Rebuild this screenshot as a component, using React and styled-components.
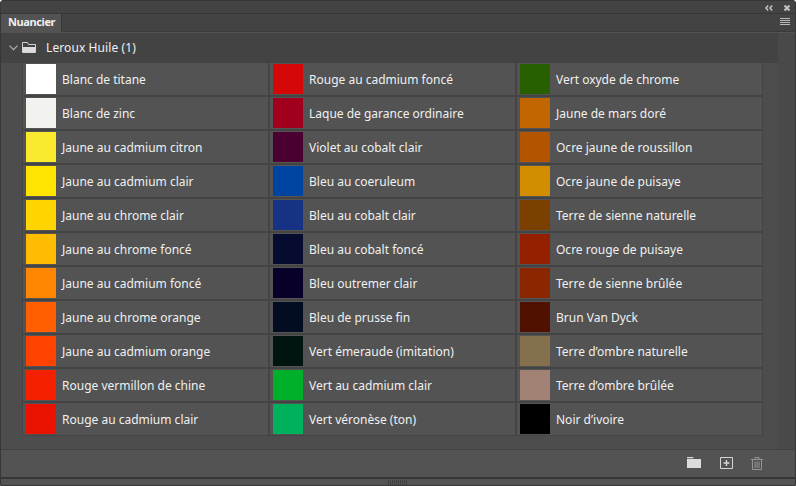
import { Fragment } from 'react'
import styled, { createGlobalStyle } from 'styled-components'

const columns = [
  [
    ['Blanc de titane', '#ffffff'],
    ['Blanc de zinc', '#f2f3ee'],
    ['Jaune au cadmium citron', '#fae92d'],
    ['Jaune au cadmium clair', '#ffe400'],
    ['Jaune au chrome clair', '#ffd500'],
    ['Jaune au chrome foncé', '#ffbc00'],
    ['Jaune au cadmium foncé', '#ff8600'],
    ['Jaune au chrome orange', '#ff5f00'],
    ['Jaune au cadmium orange', '#ff4200'],
    ['Rouge vermillon de chine', '#f42000'],
    ['Rouge au cadmium clair', '#e91200'],
  ],
  [
    ['Rouge au cadmium foncé', '#d50707'],
    ['Laque de garance ordinaire', '#a0001c'],
    ['Violet au cobalt clair', '#4b0032'],
    ['Bleu au coeruleum', '#0044a2'],
    ['Bleu au cobalt clair', '#163285'],
    ['Bleu au cobalt foncé', '#060c2f'],
    ['Bleu outremer clair', '#080029'],
    ['Bleu de prusse fin', '#020d22'],
    ['Vert émeraude (imitation)', '#001510'],
    ['Vert au cadmium clair', '#00b02a'],
    ['Vert véronèse (ton)', '#00b15b'],
  ],
  [
    ['Vert oxyde de chrome', '#286000'],
    ['Jaune de mars doré', '#c16600'],
    ['Ocre jaune de roussillon', '#b35500'],
    ['Ocre jaune de puisaye', '#d38d00'],
    ['Terre de sienne naturelle', '#7b3f00'],
    ['Ocre rouge de puisaye', '#942000'],
    ['Terre de sienne brûlée', '#8b2700'],
    ['Brun Van Dyck', '#501100'],
    ['Terre d’ombre naturelle', '#84704c'],
    ['Terre d’ombre brûlée', '#a18274'],
    ['Noir d’ivoire', '#000000'],
  ],
]

export default function App() {
  return (
    <Fragment>
      <GlobalStyle />
      <Panel>
        <TitleBar>
          <svg width="8" height="6" viewBox="0 0 8 6" fill="none" stroke="#c4c4c4" strokeWidth="1.5">
            <path d="M3.2 .5 1 3l2.2 2.5M7.2 .5 5 3l2.2 2.5" />
          </svg>
          <svg width="6" height="6" viewBox="0 0 6 6" fill="none" stroke="#c0c0c0" strokeWidth="2.2">
            <path d="m.5 .5 5 5m0-5-5 5" />
          </svg>
        </TitleBar>
        <TabBar>
          <Tab>Nuancier</Tab>
          <MenuIcon width="10" height="7" viewBox="0 0 10 7" fill="#b8b8b8" shapeRendering="crispEdges">
            <path d="M0 0h10v1H0zM0 2h10v1H0zM0 4h10v1H0zM0 6h10v1H0z" />
          </MenuIcon>
        </TabBar>
        <Body>
          <Content>
            <Group>
              <svg width="9" height="6" viewBox="0 0 9 6" fill="none" stroke="#b5b5b5" strokeWidth="1.1">
                <path d="m.5 .7 4 4 4-4" />
              </svg>
              <svg width="14" height="11" viewBox="0 0 14 11">
                <path d="M.5 10.5V.5h5l1 2h7v8z" fill="none" stroke="#d2d2d2" />
                <path d="M1 5h12v5H1z" fill="#dcdcdc" />
              </svg>
              <GroupName>Leroux Huile (1)</GroupName>
            </Group>
            <Grid>
              {columns.map((column, i) => (
                <Column key={i}>
                  {column.map(([name, color]) => (
                    <Cell key={name}>
                      <Swatch $color={color} />
                      {name}
                    </Cell>
                  ))}
                </Column>
              ))}
            </Grid>
          </Content>
          <Scrollbar />
        </Body>
        <Footer>
          <svg width="14" height="12" viewBox="0 0 14 12" fill="#dcdcdc">
            <path d="M0 0h6l1 1.3H0zM0 2h14v9H0z" />
          </svg>
          <svg width="13" height="12" viewBox="0 0 13 12" fill="none" stroke="#d6d6d6">
            <path d="M.5 .5h12v11H.5z" />
            <path d="M6.5 3v6M3.5 6h6" strokeWidth="1.4" />
          </svg>
          <TrashIcon width="12" height="13" viewBox="0 0 12 13" fill="none" stroke="#949494">
            <path d="M0 2.5h12M4 2V.5h4V2M1.5 3v9.5h9V3M4 4.5V11M6 4.5V11M8 4.5V11" />
          </TrashIcon>
        </Footer>
        <Grip>
          <svg width="20" height="5" viewBox="0 0 20 5" stroke="#404040" shapeRendering="crispEdges">
            <path d="M.5 0v5M2.5 0v5M4.5 0v5M6.5 0v5M8.5 0v5M10.5 0v5M12.5 0v5M14.5 0v5M16.5 0v5M18.5 0v5" />
          </svg>
        </Grip>
      </Panel>
    </Fragment>
  )
}

const GlobalStyle = createGlobalStyle`
  * { box-sizing: border-box; }

  body {
    margin: 0;
    background: #fff;
    overflow: hidden;
  }

  svg {
    display: block;
    flex: none;
  }
`

const Panel = styled.div`
  display: flex;
  flex-direction: column;
  width: 796px;
  height: 486px;
  border: 1px solid #373737;
  border-radius: 3px 3px 0 0;
  background: #4d4d4d;
  color: #f0f0f0;
  font-family: "Noto Sans", sans-serif;
  font-size: 12px;
`

const TitleBar = styled.div`
  display: flex;
  align-items: center;
  justify-content: flex-end;
  gap: 11px;
  height: 13px;
  padding: 1px 5px 0 0;
  background: #434343;
  border-bottom: 1px solid #373737;
`

const TabBar = styled.div`
  display: flex;
  align-items: center;
  justify-content: space-between;
  height: 19px;
  padding-right: 5px;
  background: #434343;
  border-bottom: 1px solid #535353;
  box-shadow: inset 0 -1px #3b3b3b;
`

const Tab = styled.div`
  width: 61px;
  height: 18px;
  padding-left: 7px;
  border-right: 1px solid #373737;
  background: #535353;
  font-size: 11px;
  font-weight: 700;
  letter-spacing: -0.4px;
  line-height: 16px;
`

const MenuIcon = styled.svg`
  margin-bottom: 3px;
`

const Body = styled.div`
  display: flex;
  height: 416px;
`

const Content = styled.div`
  width: 777px;
`

const Group = styled.div`
  display: flex;
  align-items: center;
  height: 30px;
  padding: 0 0 1px 8px;
  gap: 4px;
  background: #434343;
`

const GroupName = styled.span`
  margin-left: 6px;
  letter-spacing: 0.1px;
`

const Grid = styled.div`
  display: flex;
  padding-left: 21px;
`

const Column = styled.div`
  width: 247px;
`

const Cell = styled.div`
  display: flex;
  align-items: center;
  width: 247px;
  height: 34px;
  padding-left: 3px;
  border: 1px solid #444;
  border-top-width: 0;
  border-bottom-width: 2px;
  background: #535353;
  line-height: 17px;
  white-space: nowrap;

  &:last-child {
    height: 33px;
    border-bottom-width: 1px;
  }
`

const Swatch = styled.div`
  width: 30px;
  height: 30px;
  margin-right: 6px;
  background: ${({ $color }) => $color};
`

const Scrollbar = styled.div`
  flex: 1;
  background: #494949;
`

const Footer = styled.div`
  display: flex;
  align-items: center;
  justify-content: flex-end;
  gap: 19px;
  height: 28px;
  padding: 0 31px 1px 0;
  background: #535353;
  border-top: 1px solid #434343;
`

const TrashIcon = styled.svg`
  margin: 1px 1px 0 -1px;
`

const Grip = styled.div`
  display: flex;
  align-items: center;
  justify-content: center;
  height: 8px;
  background: #535353;
  border-top: 2px solid #373737;
`
